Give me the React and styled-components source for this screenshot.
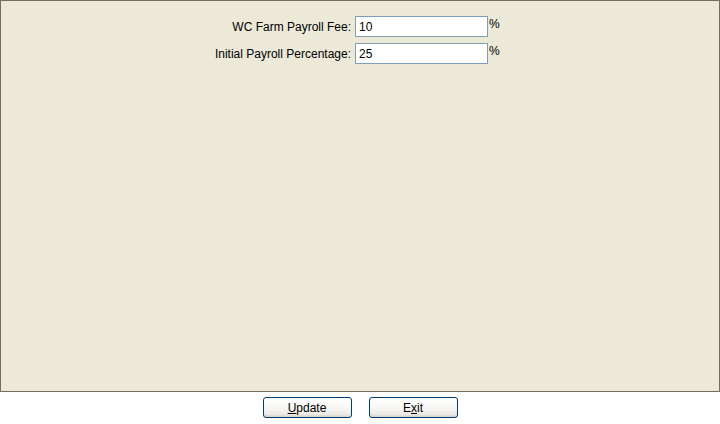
import React from "react";
import styled, { createGlobalStyle } from "styled-components";

const Global = createGlobalStyle`
  html, body { margin: 0; padding: 0; background: #ffffff; }
  body { font-family: "Liberation Sans", Arial, sans-serif; font-size: 12px; color: #000; }
  * { box-sizing: border-box; }
`;

const Page = styled.div`
  width: 720px;
  height: 424px;
  display: flex;
  flex-direction: column;
`;

const Panel = styled.div`
  width: 720px;
  height: 392px;
  background: #ece9d8;
  border: 1px solid #716f64;
  padding-top: 15px;
`;

const Form = styled.div`
  display: grid;
  grid-template-columns: 350px 133px auto;
  column-gap: 4px;
  row-gap: 6px;
  align-items: center;
`;

const Label = styled.label`
  text-align: right;
  font-size: 12px;
  line-height: 14px;
  white-space: nowrap;
`;

const InputCell = styled.div`
  display: flex;
  align-items: flex-start;
`;

const Input = styled.input`
  width: 133px;
  height: 21px;
  border: 1px solid #7f9db9;
  background: #fff;
  padding: 0 3px;
  font-family: "Liberation Sans", Arial, sans-serif;
  font-size: 12px;
  color: #000;
  outline: none;
  margin: 0;
`;

const Unit = styled.span`
  align-self: start;
  margin-left: -3px;
  font-size: 12px;
  line-height: 14px;
  padding-top: 1px;
`;

const ButtonBar = styled.div`
  flex: 1;
  display: flex;
  justify-content: center;
  align-items: flex-start;
  gap: 17px;
  padding-top: 5px;
`;

const Button = styled.button`
  width: 89px;
  height: 21px;
  border: 1px solid #003c74;
  border-radius: 3px;
  background: linear-gradient(#ffffff 0%, #f7f7f4 50%, #ecebe6 85%, #d6d0c5 100%);
  font-family: "Liberation Sans", Arial, sans-serif;
  font-size: 12px;
  color: #000;
  padding: 0;
  margin: 0;
  cursor: pointer;
  u { text-decoration: underline; }
`;

export default function App() {
  return (
    <Page>
      <Global />
      <Panel>
        <Form>
          <Label>WC Farm Payroll Fee:</Label>
          <InputCell><Input defaultValue="10" /></InputCell>
          <Unit>%</Unit>
          <Label>Initial Payroll Percentage:</Label>
          <InputCell><Input defaultValue="25" /></InputCell>
          <Unit>%</Unit>
        </Form>
      </Panel>
      <ButtonBar>
        <Button><u>U</u>pdate</Button>
        <Button>E<u>x</u>it</Button>
      </ButtonBar>
    </Page>
  );
}
